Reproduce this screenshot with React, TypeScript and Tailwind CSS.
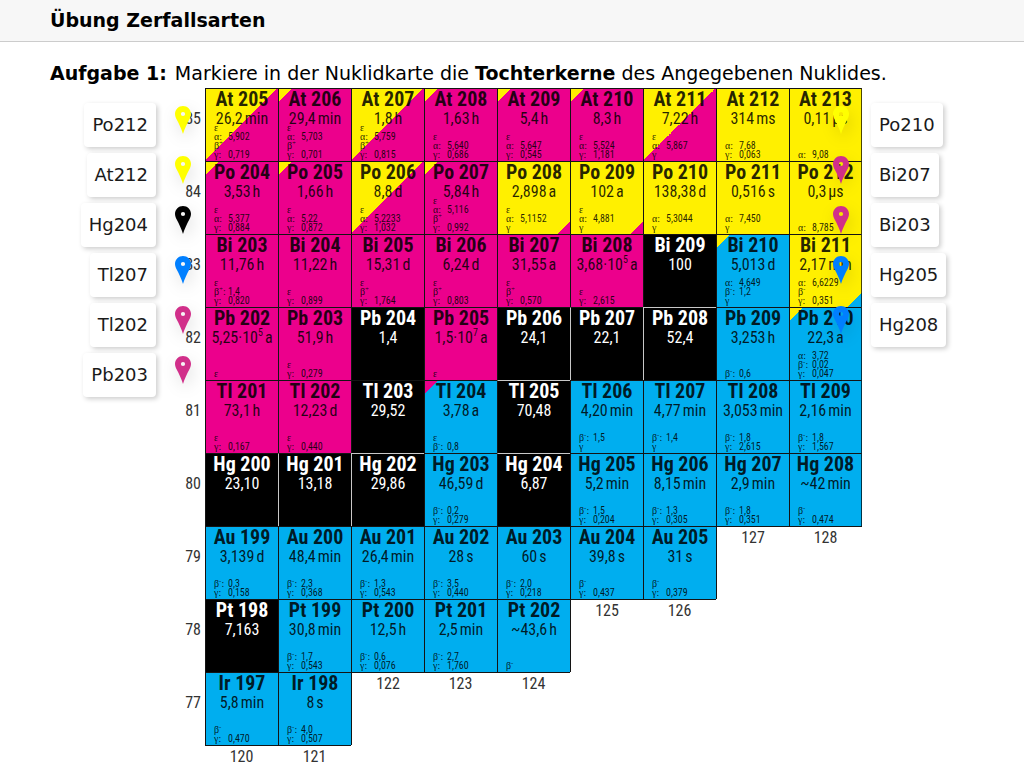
import { clsx } from "clsx";

type Nuclide = {
  name: string;
  value: string;
  unit?: string;
  exp?: string;
  fill: string;
  decay?: string[];
  lightLeft?: boolean;
  lightTop?: boolean;
};
type Cell = Nuclide | number | null;

const fills: Record<string, string> = {
  Y: "bg-[#fff000]",
  M: "bg-[#ec008c]",
  B: "bg-[#00aeef]",
  K: "bg-black",
  "Y/M": "bg-[linear-gradient(135deg,#fff000_50%,#ec008c_50%)]",
  yM: "bg-[linear-gradient(135deg,#fff000_10px,#ec008c_10px)]",
  yB: "bg-[linear-gradient(135deg,#fff000_10px,#00aeef_10px)]",
  mB: "bg-[linear-gradient(135deg,#ec008c_10px,#00aeef_10px)]",
  Ym: "bg-[linear-gradient(315deg,#ec008c_9px,#fff000_9px)]",
  Yb: "bg-[linear-gradient(315deg,#00aeef_10px,#fff000_10px)]",
};

// Half-life is written as "value unit"; "^" introduces an exponent.
function n(name: string, half: string, fill: string, decay = "", light = ""): Nuclide {
  const [amount, unit] = half.split(" ");
  const [value, exp] = amount.split("^");
  return {
    name,
    value,
    unit,
    exp,
    fill,
    decay: decay ? decay.split("|") : [],
    lightLeft: light.includes("l"),
    lightTop: light.includes("t"),
  };
}

const rows: { z: number; cells: Cell[] }[] = [
  {
    z: 85,
    cells: [
      n("At 205", "26,2 min", "Y/M", "ε|α 5,902|β+|γ 0,719"),
      n("At 206", "29,4 min", "yM", "ε|α 5,703|β+|γ 0,701"),
      n("At 207", "1,8 h", "Y/M", "ε|α 5,759|β+|γ 0,815"),
      n("At 208", "1,63 h", "yM", "ε|α 5,640|γ 0,686"),
      n("At 209", "5,4 h", "yM", "ε|α 5,647|γ 0,545"),
      n("At 210", "8,3 h", "yM", "ε|α 5,524|γ 1,181"),
      n("At 211", "7,22 h", "Y/M", "ε|α 5,867|γ"),
      n("At 212", "314 ms", "Y", "α 7,68|γ 0,063"),
      n("At 213", "0,11 µs", "Y", "α 9,08"),
    ],
  },
  {
    z: 84,
    cells: [
      n("Po 204", "3,53 h", "yM", "ε|α 5,377|γ 0,884"),
      n("Po 205", "1,66 h", "yM", "ε|α 5,22|γ 0,872"),
      n("Po 206", "8,8 d", "Y/M", "ε|α 5,2233|γ 1,032"),
      n("Po 207", "5,84 h", "yM", "ε|α 5,116|β+|γ 0,992"),
      n("Po 208", "2,898 a", "Ym", "ε|α 5,1152|γ"),
      n("Po 209", "102 a", "Ym", "ε|α 4,881|γ"),
      n("Po 210", "138,38 d", "Y", "α 5,3044|γ"),
      n("Po 211", "0,516 s", "Y", "α 7,450|γ"),
      n("Po 212", "0,3 µs", "Y", "α 8,785"),
    ],
  },
  {
    z: 83,
    cells: [
      n("Bi 203", "11,76 h", "M", "ε|β+ 1,4|γ 0,820"),
      n("Bi 204", "11,22 h", "M", "ε|γ 0,899"),
      n("Bi 205", "15,31 d", "M", "ε|β+|γ 1,764"),
      n("Bi 206", "6,24 d", "M", "ε|β+|γ 0,803"),
      n("Bi 207", "31,55 a", "M", "ε|β+|γ 0,570"),
      n("Bi 208", "3,68·10^5 a", "M", "ε|γ 2,615"),
      n("Bi 209", "100", "K"),
      n("Bi 210", "5,013 d", "yB", "α 4,649|β- 1,2|γ"),
      n("Bi 211", "2,17 min", "Yb", "α 6,6229|β-|γ 0,351"),
    ],
  },
  {
    z: 82,
    cells: [
      n("Pb 202", "5,25·10^5 a", "M", "ε"),
      n("Pb 203", "51,9 h", "M", "ε|γ 0,279"),
      n("Pb 204", "1,4", "K"),
      n("Pb 205", "1,5·10^7 a", "M", "ε"),
      n("Pb 206", "24,1", "K"),
      n("Pb 207", "22,1", "K", "", "l"),
      n("Pb 208", "52,4", "K", "", "lt"),
      n("Pb 209", "3,253 h", "B", "β- 0,6"),
      n("Pb 210", "22,3 a", "yB", "α 3,72|β- 0,02|γ 0,047"),
    ],
  },
  {
    z: 81,
    cells: [
      n("Tl 201", "73,1 h", "M", "ε|γ 0,167"),
      n("Tl 202", "12,23 d", "M", "ε|γ 0,440"),
      n("Tl 203", "29,52", "K"),
      n("Tl 204", "3,78 a", "mB", "ε|β- 0,8"),
      n("Tl 205", "70,48", "K", "", "t"),
      n("Tl 206", "4,20 min", "B", "β- 1,5|γ"),
      n("Tl 207", "4,77 min", "B", "β- 1,4|γ"),
      n("Tl 208", "3,053 min", "B", "β- 1,8|γ 2,615"),
      n("Tl 209", "2,16 min", "B", "β- 1,8|γ 1,567"),
    ],
  },
  {
    z: 80,
    cells: [
      n("Hg 200", "23,10", "K"),
      n("Hg 201", "13,18", "K", "", "l"),
      n("Hg 202", "29,86", "K", "", "lt"),
      n("Hg 203", "46,59 d", "B", "β- 0,2|γ 0,279"),
      n("Hg 204", "6,87", "K", "", "t"),
      n("Hg 205", "5,2 min", "B", "β- 1,5|γ 0,204"),
      n("Hg 206", "8,15 min", "B", "β- 1,3|γ 0,305"),
      n("Hg 207", "2,9 min", "B", "β- 1,8|γ 0,351"),
      n("Hg 208", "~42 min", "B", "β-|γ 0,474"),
    ],
  },
  {
    z: 79,
    cells: [
      n("Au 199", "3,139 d", "B", "β- 0,3|γ 0,158"),
      n("Au 200", "48,4 min", "B", "β- 2,3|γ 0,368"),
      n("Au 201", "26,4 min", "B", "β- 1,3|γ 0,543"),
      n("Au 202", "28 s", "B", "β- 3,5|γ 0,440"),
      n("Au 203", "60 s", "B", "β- 2,0|γ 0,218"),
      n("Au 204", "39,8 s", "B", "β-|γ 0,437"),
      n("Au 205", "31 s", "B", "β-|γ 0,379"),
      127,
      128,
    ],
  },
  {
    z: 78,
    cells: [
      n("Pt 198", "7,163", "K"),
      n("Pt 199", "30,8 min", "B", "β- 1,7|γ 0,543"),
      n("Pt 200", "12,5 h", "B", "β- 0,6|γ 0,076"),
      n("Pt 201", "2,5 min", "B", "β- 2,7|γ 1,760"),
      n("Pt 202", "~43,6 h", "B", "β-"),
      125,
      126,
      null,
      null,
    ],
  },
  {
    z: 77,
    cells: [
      n("Ir 197", "5,8 min", "B", "β-|γ 0,470"),
      n("Ir 198", "8 s", "B", "β- 4,0|γ 0,507"),
      122,
      123,
      124,
      null,
      null,
      null,
      null,
    ],
  },
];

const pinColors = {
  yellow: "fill-[#ffff00]",
  black: "fill-black",
  blue: "fill-[#007fff]",
  pink: "fill-[#d12f8a]",
};
type PinColor = keyof typeof pinColors;
type Answer = { label: string; color: PinColor };

const leftAnswers: Answer[] = [
  { label: "Po212", color: "yellow" },
  { label: "At212", color: "yellow" },
  { label: "Hg204", color: "black" },
  { label: "Tl207", color: "blue" },
  { label: "Tl202", color: "pink" },
  { label: "Pb203", color: "pink" },
];
const rightAnswers: Answer[] = [
  { label: "Po210", color: "yellow" },
  { label: "Bi207", color: "pink" },
  { label: "Bi203", color: "pink" },
  { label: "Hg205", color: "blue" },
  { label: "Hg208", color: "blue" },
];

function DecayLine({ text }: { text: string }) {
  const [mode, energy] = text.split(" ");
  const sign = mode[1];
  return (
    <div className="flex h-[9px] text-[10px] leading-[9px]">
      <span className="flex w-[14px] shrink-0 whitespace-nowrap font-['Liberation_Serif',serif]">
        {mode[0]}
        {sign && <span className="text-[7px] leading-[5px]">{sign}</span>}
        {energy && ":"}
      </span>
      {energy && <span>{energy}</span>}
    </div>
  );
}

function NuclideCell({ item, last }: { item: Nuclide; last: boolean }) {
  const stable = item.fill === "K";
  return (
    <td
      className={clsx(
        "border-l border-t bg-origin-border p-0",
        last && "border-r border-r-black/70",
        item.lightLeft ? "border-l-[#c8c8c8]" : "border-l-[#141414]",
        item.lightTop ? "border-t-[#c8c8c8]" : "border-t-[#141414]",
        fills[item.fill],
        stable ? "text-white" : "text-black/85",
      )}
    >
      <div className="grid h-[72px]">
        <div className="col-start-1 row-start-1 text-center">
          <div className="text-[20px] font-bold leading-[21px]">{item.name}</div>
          <div className="flex justify-center whitespace-nowrap text-[16px] leading-[17px]">
            {item.value}
            {item.exp && <span className="text-[10px] leading-[8px]">{item.exp}</span>}
            {item.unit && <span className="ml-0.5">{item.unit}</span>}
          </div>
        </div>
        <div className="col-start-1 row-start-1 self-end pb-0.5 pl-2">
          {item.decay?.map((d) => <DecayLine key={d} text={d} />)}
        </div>
      </div>
    </td>
  );
}

function NuclideChart() {
  return (
    <table className="w-[706px] shrink-0 table-fixed border-separate border-spacing-0 font-['Roboto_Condensed','Liberation_Sans',sans-serif] text-[#333]">
      <colgroup>
        <col className="w-[49px]" />
        {rows[0].cells.map((_, i) => (
          <col key={i} className="w-[73px]" />
        ))}
      </colgroup>
      <tbody>
        {rows.map((row, r) => (
          <tr key={row.z} className="h-[73px]">
            <th scope="row" className="p-0 pr-1 pt-5 text-right align-top text-[16px] font-normal leading-[22px]">
              {row.z}
            </th>
            {row.cells.map((cell, c) => {
              if (cell === null) return <td key={c} />;
              if (typeof cell === "number") {
                return (
                  <td
                    key={c}
                    className={clsx(
                      "border-t border-t-[#141414] p-0 text-center align-top text-[16px] leading-[22px]",
                      typeof rows[r].cells[c - 1] === "object" && "border-l border-l-[#141414]",
                    )}
                  >
                    {cell}
                  </td>
                );
              }
              return <NuclideCell key={c} item={cell} last={c === 8} />;
            })}
          </tr>
        ))}
        <tr>
          <td />
          <td className="border-t border-t-[#141414] p-0 text-center text-[16px] leading-[22px]">120</td>
          <td className="border-t border-t-[#141414] p-0 text-center text-[16px] leading-[22px]">121</td>
        </tr>
      </tbody>
    </table>
  );
}

function AnswerList({ answers, side }: { answers: Answer[]; side: "left" | "right" }) {
  return (
    <ul
      className={clsx(
        "relative flex shrink-0 flex-col gap-1.5 pt-[15px] text-[18px]",
        side === "left" ? "w-[106px] items-end" : "ml-[9px] items-start",
      )}
    >
      {answers.map(({ label, color }) => (
        <li
          key={label}
          className="relative flex h-11 items-center rounded bg-white px-2 pb-0.5 text-[#1a1a1a] shadow-[2px_2px_5px_rgba(0,0,0,0.2)]"
        >
          {label}
          <button
            type="button"
            aria-label={`Markierung ${label}`}
            className={clsx(
              "absolute top-[3px] cursor-grab drop-shadow-[2px_6px_8px_rgba(0,0,0,0.12)]",
              side === "left" ? "left-full ml-[19px]" : "right-full mr-[22px]",
            )}
          >
            <svg width="16" height="28" viewBox="0 0 16 28" className={pinColors[color]}>
              <path
                fillRule="evenodd"
                d="M8 0C3.6 0 0 3.4 0 7.8C0 10 .8 11.7 1.7 13.6C4.2 18.5 6.5 23 8 28C9.5 23 11.8 18.5 14.3 13.6C15.2 11.7 16 10 16 7.8C16 3.4 12.4 0 8 0ZM8 5.9A2.1 2.1 0 1 1 8 10.1A2.1 2.1 0 1 1 8 5.9Z"
              />
            </svg>
          </button>
        </li>
      ))}
    </ul>
  );
}

export default function App() {
  return (
    <div className="min-h-screen bg-white font-['DejaVu_Sans',sans-serif] text-black">
      <header className="border-b border-[#ccc] bg-[#f7f7f7] px-[50px]">
        <h1 className="text-[19px] font-bold leading-[41px]">Übung Zerfallsarten</h1>
      </header>
      <main className="pl-[50px]">
        <p className="whitespace-nowrap pb-px pt-[17px] text-[19px] leading-7">
          <strong className="mr-2">Aufgabe 1:</strong>
          Markiere in der Nuklidkarte die <strong>Tochterkerne</strong> des Angegebenen Nuklides.
        </p>
        <div className="flex items-start">
          <AnswerList answers={leftAnswers} side="left" />
          <NuclideChart />
          <AnswerList answers={rightAnswers} side="right" />
        </div>
      </main>
    </div>
  );
}
